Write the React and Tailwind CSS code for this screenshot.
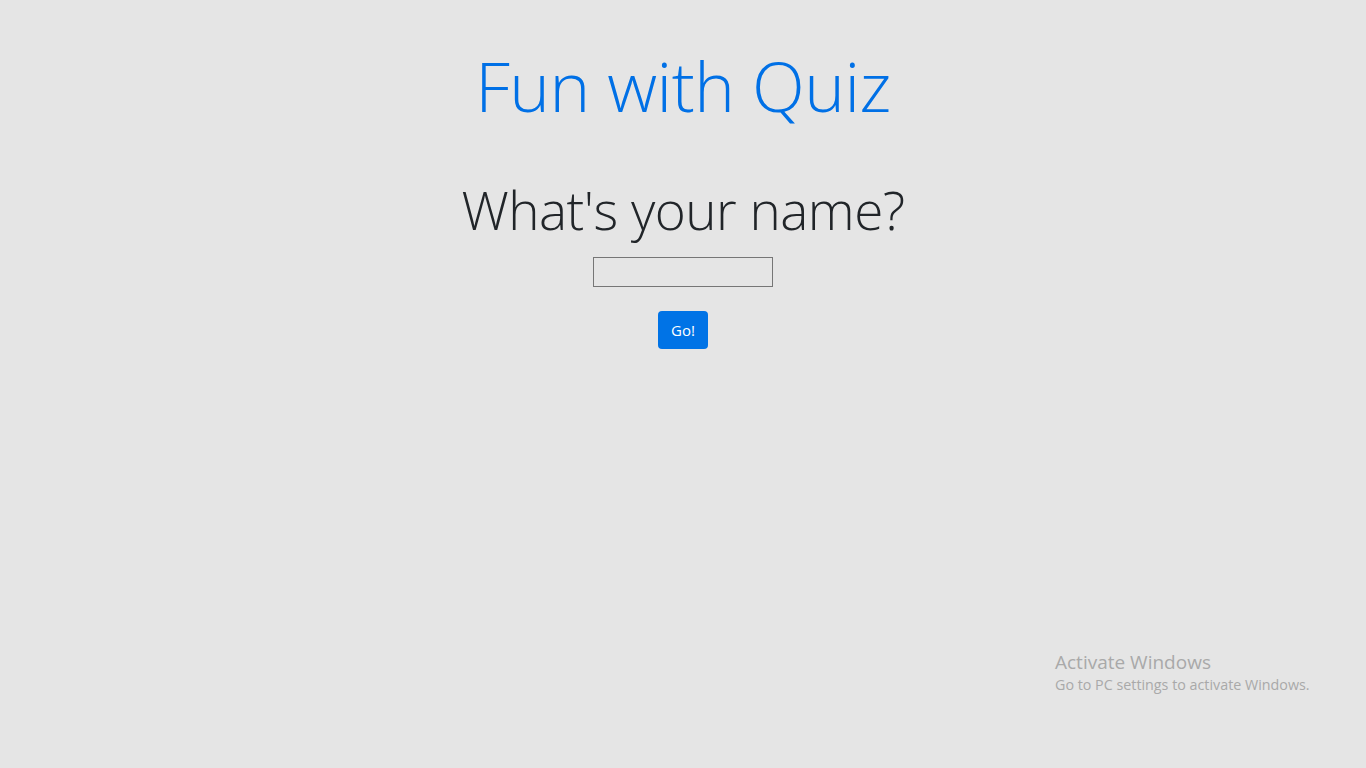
export default function App() {
  return (
    <div
      className="relative min-h-screen bg-[#e5e5e5] text-center"
      style={{ fontFamily: '"Open Sans", "Noto Sans", sans-serif' }}
    >
      <div className="flex flex-col items-center pt-[42px]">
        <h1 className="text-[69px] font-light leading-[86px] text-[#0070e6] tracking-[-0.5px]">
          Fun with Quiz
        </h1>
        <h2 className="mt-[45px] text-[53px] font-light leading-[74px] text-[#212529] tracking-[-0.5px]">
          What's your name?
        </h2>
        <input
          type="text"
          className="mt-[10px] h-[30px] w-[180px] border border-[#767676] bg-transparent px-1 outline-none"
        />
        <button className="mt-[24px] h-[38px] w-[50px] rounded-[4px] bg-[#0073e6] text-[15px] text-white">
          Go!
        </button>
      </div>

      <div className="absolute left-[1055px] top-[650px] text-left text-[#a9a9a9]">
        <div className="text-[19px] leading-[24px]">Activate Windows</div>
        <div className="text-[14.3px] leading-[22px]">Go to PC settings to activate Windows.</div>
      </div>
    </div>
  );
}
